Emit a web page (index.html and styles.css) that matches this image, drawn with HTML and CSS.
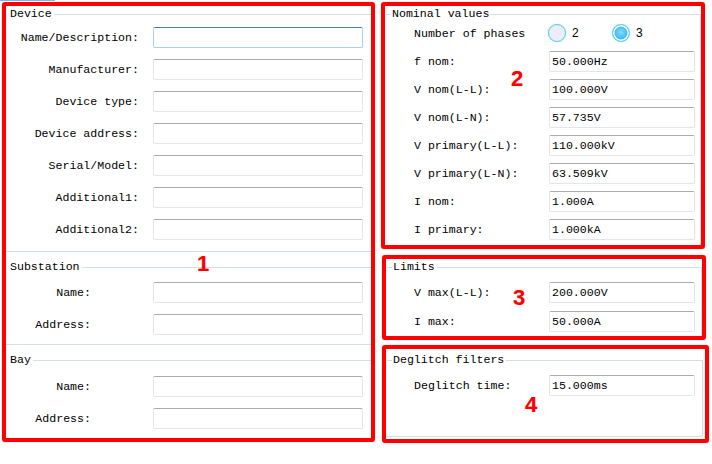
FILE: index.html
```html
<!DOCTYPE html>
<html>
<head>
<meta charset="utf-8">
<link rel="stylesheet" href="styles.css">
</head>
<body>
<div class="topstrip"><div class="tab-edge"></div></div>
<div class="page">
  <section class="mark mark-1">
    <div class="lgroup g-device">
      <div class="gtitle"><span>Device</span></div>
      <div class="rows">
        <div class="row"><span class="lbl">Name/Description:</span><div class="field focus"></div></div>
        <div class="row"><span class="lbl">Manufacturer:</span><div class="field"></div></div>
        <div class="row"><span class="lbl">Device type:</span><div class="field"></div></div>
        <div class="row"><span class="lbl">Device address:</span><div class="field"></div></div>
        <div class="row"><span class="lbl">Serial/Model:</span><div class="field"></div></div>
        <div class="row"><span class="lbl">Additional1:</span><div class="field"></div></div>
        <div class="row"><span class="lbl">Additional2:</span><div class="field"></div></div>
      </div>
    </div>
    <div class="lgroup g-sub">
      <div class="gtitle"><span>Substation</span></div>
      <div class="rows">
        <div class="row"><span class="lbl">Name:</span><div class="field"></div></div>
        <div class="row"><span class="lbl">Address:</span><div class="field"></div></div>
      </div>
    </div>
    <div class="lgroup g-bay">
      <div class="gtitle"><span>Bay</span></div>
      <div class="rows">
        <div class="row"><span class="lbl">Name:</span><div class="field"></div></div>
        <div class="row"><span class="lbl">Address:</span><div class="field"></div></div>
      </div>
    </div>
    <span class="num n1">1</span>
  </section>

  <div class="rightcol">
    <section class="mark mark-2">
      <div class="rgroup">
        <div class="gtitle"><span>Nominal values</span></div>
        <div class="rrows">
          <div class="rrow">
            <span class="rlbl">Number of phases</span>
            <div class="radios">
              <div class="radio"><span class="dot"></span><span>2</span></div>
              <div class="radio"><span class="dot on"></span><span>3</span></div>
            </div>
          </div>
          <div class="rrow"><span class="rlbl">f nom:</span><div class="field sm">50.000Hz</div></div>
          <div class="rrow"><span class="rlbl">V nom(L-L):</span><div class="field sm">100.000V</div></div>
          <div class="rrow"><span class="rlbl">V nom(L-N):</span><div class="field sm">57.735V</div></div>
          <div class="rrow"><span class="rlbl">V primary(L-L):</span><div class="field sm">110.000kV</div></div>
          <div class="rrow"><span class="rlbl">V primary(L-N):</span><div class="field sm">63.509kV</div></div>
          <div class="rrow"><span class="rlbl">I nom:</span><div class="field sm">1.000A</div></div>
          <div class="rrow"><span class="rlbl">I primary:</span><div class="field sm">1.000kA</div></div>
        </div>
      </div>
      <span class="num n2">2</span>
    </section>

    <section class="mark mark-3">
      <div class="rgroup">
        <div class="gtitle"><span>Limits</span></div>
        <div class="rrows">
          <div class="rrow"><span class="rlbl">V max(L-L):</span><div class="field sm">200.000V</div></div>
          <div class="rrow"><span class="rlbl">I max:</span><div class="field sm">50.000A</div></div>
        </div>
      </div>
      <span class="num n3">3</span>
    </section>

    <section class="mark mark-4">
      <div class="rgroup">
        <div class="gtitle"><span>Deglitch filters</span></div>
        <div class="rrows">
          <div class="rrow"><span class="rlbl">Deglitch time:</span><div class="field sm">15.000ms</div></div>
        </div>
      </div>
      <span class="num n4">4</span>
    </section>
  </div>
</div>
</body>
</html>
```

FILE: styles.css
```css
* { box-sizing: border-box; }

body {
  margin: 0;
  width: 712px;
  height: 464px;
  overflow: hidden;
  background: #ffffff;
  color: #000000;
  font-family: "Liberation Mono", "DejaVu Sans Mono", monospace;
  font-size: 11.6px;
}

.topstrip { height: 1px; }
.tab-edge { width: 55px; height: 1px; background: #7ab6ea; }

.page {
  display: flex;
  align-items: flex-start;
  padding-left: 2px;
  margin-top: 1px;
}

.mark {
  position: relative;
  border: 4px solid #ff0000;
  border-radius: 3px;
  box-shadow: 0 0 1px rgba(255, 0, 0, 0.5);
}

.mark-1 { width: 373px; height: 440px; }

.rightcol {
  display: flex;
  flex-direction: column;
  margin-left: 6px;
}

.mark-2 { width: 324px; height: 247px; }
.mark-3 { width: 324px; height: 85px; margin-top: 6px; margin-left: 1px; }
.mark-4 { width: 327px; height: 98px; margin-top: 5px; margin-left: 1px; }

/* group titles */
.gtitle {
  display: flex;
  align-items: center;
  height: 16px;
  line-height: 16px;
  white-space: nowrap;
}
.gtitle::after {
  content: "";
  flex: 1;
  height: 1px;
  background: #d5dfe5;
  margin-left: 2px;
}

/* left groups */
.lgroup { display: flex; flex-direction: column; }
.lgroup .gtitle { padding-left: 4px; }
.g-device, .g-sub { border-bottom: 1px solid #d5dfe5; }

.rows { display: flex; flex-direction: column; gap: 11px; }
.g-device .rows { margin-top: 5px; padding-bottom: 11px; }
.g-sub .gtitle { margin-top: 7px; }
.g-sub .rows { margin-top: 7px; padding-bottom: 9px; }
.g-bay .gtitle { margin-top: 7px; }
.g-bay .rows { margin-top: 8px; }

.row {
  display: flex;
  align-items: center;
  height: 21px;
}
.lbl {
  flex: 1;
  text-align: right;
  white-space: nowrap;
}
.g-device .lbl { padding-right: 14px; }
.g-sub .lbl, .g-bay .lbl { padding-right: 62px; }
.row .field { margin-right: 8px; }

.field {
  width: 210px;
  height: 21px;
  border: 1px solid #e1e5ec;
  border-top-color: #acacac;
  border-radius: 2px;
  background: #ffffff;
  padding: 0 2px;
  line-height: 19px;
  white-space: nowrap;
}
.field.focus {
  border-color: #a9cfe9;
  border-top-color: #4a7fae;
}
.field.sm { width: 146px; }

/* right groups */
.rgroup {
  display: flex;
  flex-direction: column;
  border-right: 1px solid #d5dfe5;
}
.rgroup .gtitle { margin-top: -8px; }
.rgroup .gtitle::before {
  content: "";
  width: 5px;
  height: 1px;
  background: #d5dfe5;
  margin-left: 1px;
  margin-right: 1px;
}

.mark-2 .rgroup { width: 316px; margin-top: 8px; height: 231px; }
.mark-3 .rgroup { width: 316px; margin-top: 8px; height: 69px; }
.mark-4 .rgroup {
  width: 317px;
  margin-top: 11px;
  height: 77px;
  border-bottom: 1px solid #d5dfe5;
  border-bottom-right-radius: 3px;
}

.rrows { display: flex; flex-direction: column; }
.mark-2 .rrows { margin-top: 1px; gap: 7px; }
.mark-3 .rrows { margin-top: 7px; gap: 8px; }
.mark-4 .rrows { margin-top: 7px; }

.rrow {
  display: flex;
  align-items: center;
  height: 21px;
}
.rlbl { flex: 1; white-space: nowrap; }
.mark-2 .rlbl { padding-left: 29px; }
.mark-3 .rlbl, .mark-4 .rlbl { padding-left: 28px; }
.mark-2 .rrow .field { margin-right: 5px; }
.mark-3 .rrow .field { margin-right: 6px; }
.mark-4 .rrow .field { margin-right: 7px; }

/* radios */
.radios {
  display: flex;
  width: 152px;
  margin-top: -2px;
}
.radio {
  display: flex;
  align-items: center;
  width: 64px;
  font-family: "Liberation Sans", Arial, sans-serif;
  font-size: 12px;
}
.dot {
  width: 18px;
  height: 18px;
  border-radius: 50%;
  border: 1px solid #55d3dc;
  background: #ecedf8;
  box-shadow: 0 0 1.5px #8fe6ea;
  margin-right: 6px;
}
.dot.on {
  background: radial-gradient(circle at 50% 45%, #8ad9fb 0, #4cc0f6 45%, #2eaef0 70%);
  box-shadow: inset 0 0 0 1.5px #ffffff, 0 0 1.5px #8fe6ea;
}

/* annotation numbers */
.num {
  position: absolute;
  font-family: "Liberation Sans", Arial, sans-serif;
  font-weight: bold;
  font-size: 22px;
  line-height: 22px;
  color: #ff0000;
  text-shadow: 0 0 1px rgba(255, 0, 0, 0.4);
}
.n1 { left: 191px; top: 247px; }
.n2 { left: 126px; top: 62px; }
.n3 { left: 127px; top: 28px; }
.n4 { left: 139px; top: 45px; }
```
